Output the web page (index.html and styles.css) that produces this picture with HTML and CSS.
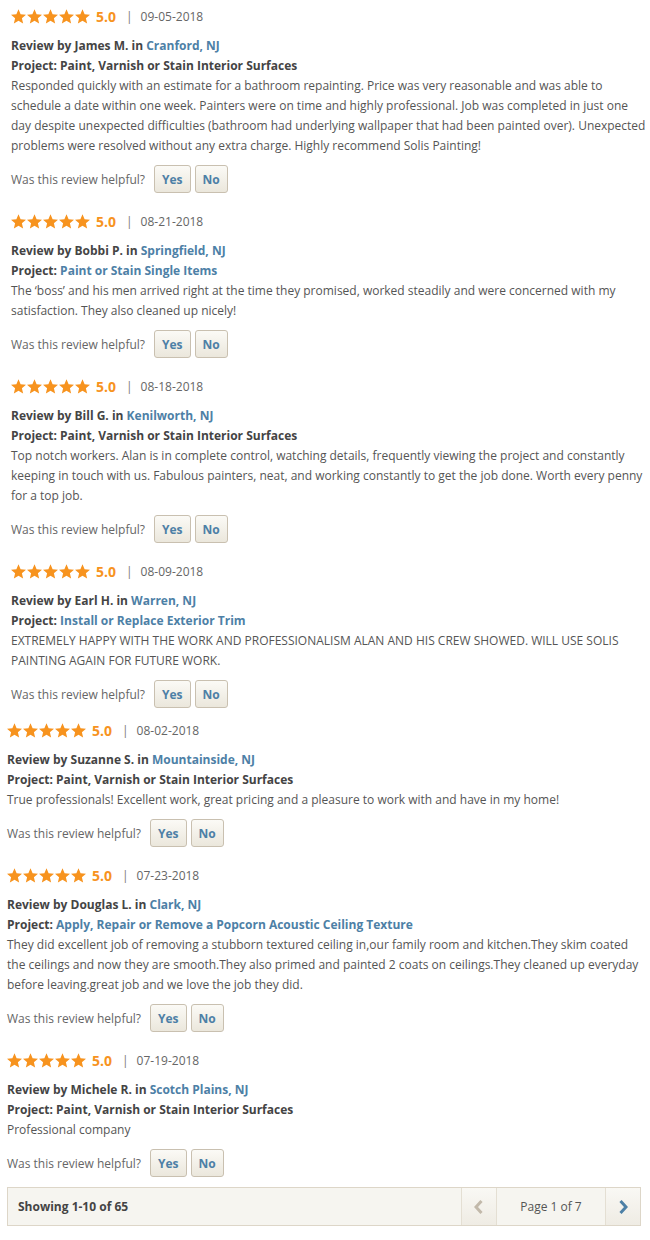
FILE: index.html
```html
<!DOCTYPE html>
<html lang="en">
<head>
    <meta charset="UTF-8">
    <title>Reviews</title>
    <link rel="stylesheet" href="styles.css">
</head>
<body>
    <svg width="0" height="0" class="defs">
        <symbol id="star" viewBox="2 2 20 19.3">
            <path d="M12 17.27L18.18 21l-1.64-7.03L22 9.24l-7.19-.61L12 2 9.19 8.63 2 9.24l5.46 4.73L5.82 21z"/>
        </symbol>
    </svg>

    <div class="reviews">
        <div class="review">
            <div class="rating">
                <span class="stars"><svg><use href="#star"/></svg><svg><use href="#star"/></svg><svg><use href="#star"/></svg><svg><use href="#star"/></svg><svg><use href="#star"/></svg></span>
                <span class="score">5.0</span>
                <span class="sep">|</span>
                <span class="date">09-05-2018</span>
            </div>
            <div class="meta">Review by James M. in <a href="#">Cranford, NJ</a></div>
            <div class="meta">Project: Paint, Varnish or Stain Interior Surfaces</div>
            <p class="text">Responded quickly with an estimate for a bathroom repainting. Price was very reasonable and was able to schedule a date within one week. Painters were on time and highly professional. Job was completed in just one day despite unexpected difficulties (bathroom had underlying wallpaper that had been painted over). Unexpected problems were resolved without any extra charge. Highly recommend Solis Painting!</p>
            <div class="helpful">Was this review helpful? <button>Yes</button><button>No</button></div>
        </div>

        <div class="review">
            <div class="rating">
                <span class="stars"><svg><use href="#star"/></svg><svg><use href="#star"/></svg><svg><use href="#star"/></svg><svg><use href="#star"/></svg><svg><use href="#star"/></svg></span>
                <span class="score">5.0</span>
                <span class="sep">|</span>
                <span class="date">08-21-2018</span>
            </div>
            <div class="meta">Review by Bobbi P. in <a href="#">Springfield, NJ</a></div>
            <div class="meta">Project: <a href="#">Paint or Stain Single Items</a></div>
            <p class="text">The ‘boss’ and his men arrived right at the time they promised, worked steadily and were concerned with my satisfaction. They also cleaned up nicely!</p>
            <div class="helpful">Was this review helpful? <button>Yes</button><button>No</button></div>
        </div>

        <div class="review">
            <div class="rating">
                <span class="stars"><svg><use href="#star"/></svg><svg><use href="#star"/></svg><svg><use href="#star"/></svg><svg><use href="#star"/></svg><svg><use href="#star"/></svg></span>
                <span class="score">5.0</span>
                <span class="sep">|</span>
                <span class="date">08-18-2018</span>
            </div>
            <div class="meta">Review by Bill G. in <a href="#">Kenilworth, NJ</a></div>
            <div class="meta">Project: Paint, Varnish or Stain Interior Surfaces</div>
            <p class="text">Top notch workers. Alan is in complete control, watching details, frequently viewing the project and constantly keeping in touch with us. Fabulous painters, neat, and working constantly to get the job done. Worth every penny for a top job.</p>
            <div class="helpful">Was this review helpful? <button>Yes</button><button>No</button></div>
        </div>

        <div class="review">
            <div class="rating">
                <span class="stars"><svg><use href="#star"/></svg><svg><use href="#star"/></svg><svg><use href="#star"/></svg><svg><use href="#star"/></svg><svg><use href="#star"/></svg></span>
                <span class="score">5.0</span>
                <span class="sep">|</span>
                <span class="date">08-09-2018</span>
            </div>
            <div class="meta">Review by Earl H. in <a href="#">Warren, NJ</a></div>
            <div class="meta">Project: <a href="#">Install or Replace Exterior Trim</a></div>
            <p class="text">EXTREMELY HAPPY WITH THE WORK AND PROFESSIONALISM ALAN AND HIS CREW SHOWED. WILL USE SOLIS PAINTING AGAIN FOR FUTURE WORK.</p>
            <div class="helpful">Was this review helpful? <button>Yes</button><button>No</button></div>
        </div>

        <div class="review narrow">
            <div class="rating">
                <span class="stars"><svg><use href="#star"/></svg><svg><use href="#star"/></svg><svg><use href="#star"/></svg><svg><use href="#star"/></svg><svg><use href="#star"/></svg></span>
                <span class="score">5.0</span>
                <span class="sep">|</span>
                <span class="date">08-02-2018</span>
            </div>
            <div class="meta">Review by Suzanne S. in <a href="#">Mountainside, NJ</a></div>
            <div class="meta">Project: Paint, Varnish or Stain Interior Surfaces</div>
            <p class="text">True professionals! Excellent work, great pricing and a pleasure to work with and have in my home!</p>
            <div class="helpful">Was this review helpful? <button>Yes</button><button>No</button></div>
        </div>

        <div class="review narrow">
            <div class="rating">
                <span class="stars"><svg><use href="#star"/></svg><svg><use href="#star"/></svg><svg><use href="#star"/></svg><svg><use href="#star"/></svg><svg><use href="#star"/></svg></span>
                <span class="score">5.0</span>
                <span class="sep">|</span>
                <span class="date">07-23-2018</span>
            </div>
            <div class="meta">Review by Douglas L. in <a href="#">Clark, NJ</a></div>
            <div class="meta">Project: <a href="#">Apply, Repair or Remove a Popcorn Acoustic Ceiling Texture</a></div>
            <p class="text">They did excellent job of removing a stubborn textured ceiling in,our family room and kitchen.They skim coated the ceilings and now they are smooth.They also primed and painted 2 coats on ceilings.They cleaned up everyday before leaving.great job and we love the job they did.</p>
            <div class="helpful">Was this review helpful? <button>Yes</button><button>No</button></div>
        </div>

        <div class="review narrow">
            <div class="rating">
                <span class="stars"><svg><use href="#star"/></svg><svg><use href="#star"/></svg><svg><use href="#star"/></svg><svg><use href="#star"/></svg><svg><use href="#star"/></svg></span>
                <span class="score">5.0</span>
                <span class="sep">|</span>
                <span class="date">07-19-2018</span>
            </div>
            <div class="meta">Review by Michele R. in <a href="#">Scotch Plains, NJ</a></div>
            <div class="meta">Project: Paint, Varnish or Stain Interior Surfaces</div>
            <p class="text">Professional company</p>
            <div class="helpful">Was this review helpful? <button>Yes</button><button>No</button></div>
        </div>
    </div>

    <div class="pager">
        <span class="showing">Showing 1-10 of 65</span>
        <div class="pages">
            <span class="arrow disabled">
                <svg width="10" height="14" viewBox="0 0 10 14"><path d="M7.5 1L2 7l5.5 6" fill="none" stroke="currentColor" stroke-width="3"/></svg>
            </span>
            <span class="page-num">Page 1 of 7</span>
            <span class="arrow">
                <svg width="10" height="14" viewBox="0 0 10 14"><path d="M2.5 1L8 7l-5.5 6" fill="none" stroke="currentColor" stroke-width="3"/></svg>
            </span>
        </div>
    </div>
</body>
</html>
```

FILE: styles.css
```css
body {
    margin: 0;
    font-family: 'Open Sans', 'Liberation Sans', sans-serif;
    font-size: 12px;
    color: #555;
    background: #fff;
}

.defs {
    position: absolute;
}

a {
    color: #4d80a6;
    text-decoration: none;
}

.reviews {
    padding: 0 4px 0 11px;
}

.review {
    padding-top: 6px;
    padding-bottom: 12px;
}

.review.narrow {
    margin-left: -4px;
}

/* first of the tighter block sits a little closer */
.review:not(.narrow) + .narrow {
    margin-top: -6px;
}

.rating {
    display: flex;
    align-items: center;
    height: 20px;
    margin-bottom: 10px;
}

.stars {
    display: flex;
    gap: 1px;
}

.stars svg {
    width: 15px;
    height: 15px;
    fill: #f7931e;
}

.score {
    font-weight: 700;
    font-size: 14px;
    color: #f7931e;
    margin-left: 6px;
}

.sep {
    color: #777;
    margin: 0 8px 0 10px;
}

.date {
    color: #666;
}

.meta {
    font-weight: 700;
    color: #444;
    line-height: 20px;
}

.text {
    margin: 0;
    line-height: 20px;
}

.helpful {
    display: flex;
    align-items: center;
    margin-top: 9px;
    color: #666;
}

.helpful button {
    font-family: inherit;
    font-size: 12px;
    font-weight: 700;
    color: #4d80a6;
    height: 28px;
    padding: 0 7px;
    margin-left: 4px;
    border: 1px solid #c9c0b0;
    border-radius: 3px;
    background: linear-gradient(#fbfaf6, #ebe7dc);
}

.helpful button:first-child {
    margin-left: 9px;
}

.pager {
    display: flex;
    justify-content: space-between;
    align-items: stretch;
    margin: -2px 9px 0 7px;
    height: 37px;
    border: 1px solid #ddd6c8;
    background: #f6f5f0;
}

.showing {
    display: flex;
    align-items: center;
    padding-left: 10px;
    font-weight: 700;
    color: #444;
}

.pages {
    display: flex;
}

.arrow {
    display: flex;
    align-items: center;
    justify-content: center;
    width: 34px;
    border-left: 1px solid #e4dfd3;
    color: #4d80a6;
    background: linear-gradient(#f9f8f4, #efece4);
}

.arrow.disabled {
    color: #c2b9aa;
}

.page-num {
    display: flex;
    align-items: center;
    justify-content: center;
    width: 108px;
    border-left: 1px solid #e4dfd3;
    color: #555;
}
```
